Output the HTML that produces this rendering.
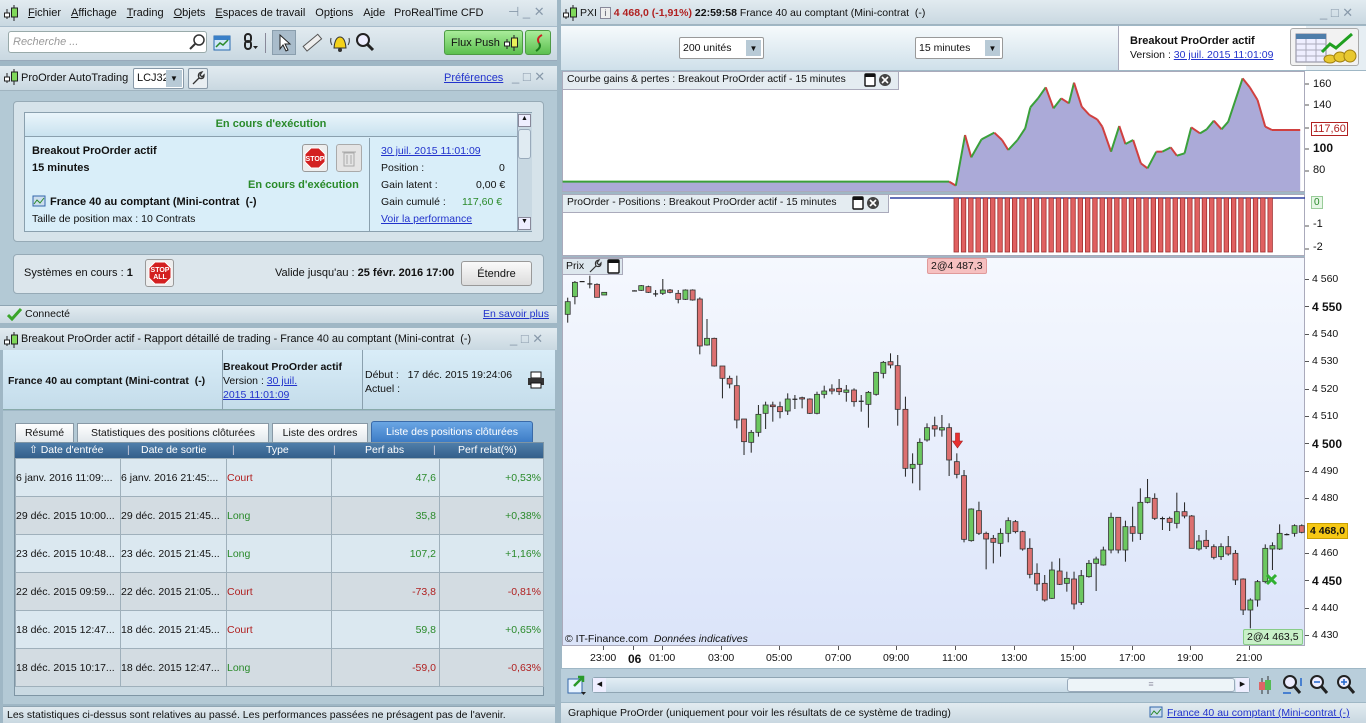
<!DOCTYPE html>
<html><head><meta charset="utf-8">
<style>
*{box-sizing:border-box;margin:0;padding:0}
body{width:1366px;height:723px;overflow:hidden;background:#9fb7c5;font-family:"Liberation Sans",Arial,sans-serif;font-size:11px;color:#111;position:relative}
.a{position:absolute;white-space:nowrap}
a,.lnk{color:#2233cc;text-decoration:underline}
.bar{background:linear-gradient(#e2ebf0,#c9d8e1)}
.b{font-weight:bold}
.g{color:#2a8a2a}.r{color:#b02020}
td{padding:0;white-space:nowrap;overflow:hidden}
.ctl{color:#8899aa;font-size:13px}
.m span{margin-right:10px}
</style></head><body>

<!-- LEFT PANE -->
<div class="a bar" style="left:0;top:0;width:557px;height:27px;border-bottom:1px solid #a8bccb"></div>
<svg class="a" style="left:4px;top:5px" width="14" height="16"><line x1="3" y1="4" x2="3" y2="14" stroke="#222"/><rect x="0.5" y="8" width="5" height="4" fill="#fff" stroke="#222"/><line x1="10" y1="0" x2="10" y2="16" stroke="#222"/><rect x="7.5" y="3" width="6" height="9" fill="#7fd85a" stroke="#222"/></svg>
<div class="a m" style="left:28px;top:7px;font-size:11px">
<span><u>F</u>ichier</span><span><u>A</u>ffichage</span><span><u>T</u>rading</span><span><u>O</u>bjets</span><span><u>E</u>spaces de travail</span><span>Op<u>t</u>ions</span><span>A<u>i</u>de</span></div>
<div class="a" style="left:394px;top:7px">ProRealTime CFD</div>
<div class="a ctl" style="left:508px;top:4px">⊣ _ ✕</div>

<div class="a bar" style="left:0;top:27px;width:557px;height:34px;border-bottom:1px solid #9ab"></div>
<div class="a" style="left:8px;top:31px;width:199px;height:22px;background:#fff;border:1px solid #9aa;border-radius:3px;color:#999;font-style:italic;padding:4px 4px;font-size:11px">Recherche ...</div>
<svg class="a" style="left:188px;top:33px" width="18" height="18"><circle cx="11" cy="7" r="5" fill="none" stroke="#333" stroke-width="1.5"/><line x1="7" y1="11" x2="2" y2="16" stroke="#333" stroke-width="2"/></svg>
<svg class="a" style="left:211px;top:31px" width="22" height="22"><rect x="3" y="5" width="16" height="14" fill="#cfe6f8" stroke="#2a6bb0"/><rect x="3" y="5" width="16" height="4" fill="#3a80c8"/><polyline points="5,16 9,12 12,14 17,9" fill="none" stroke="#2a8a2a" stroke-width="1.5"/></svg>
<svg class="a" style="left:238px;top:31px" width="22" height="22"><rect x="7" y="3" width="6" height="8" rx="3" fill="none" stroke="#222" stroke-width="2"/><rect x="7" y="10" width="6" height="8" rx="3" fill="none" stroke="#222" stroke-width="2"/><path d="M15 15l5 0-2.5 3z" fill="#222"/></svg>
<div class="a" style="left:265px;top:33px;width:1px;height:20px;background:#889"></div>
<div class="a" style="left:272px;top:30px;width:24px;height:25px;background:#a9bccb;border:1px solid #8a9ead"></div>
<svg class="a" style="left:276px;top:33px" width="18" height="20"><path d="M4 2 L4 16 L7 12 L10 18 L12 17 L9 11 L14 11 Z" fill="#fff" stroke="#222"/></svg>
<svg class="a" style="left:300px;top:31px" width="24" height="24"><rect x="3" y="9" width="19" height="6" transform="rotate(-40 12 12)" fill="#eee" stroke="#555"/></svg>
<svg class="a" style="left:328px;top:31px" width="24" height="24"><path d="M6 17 Q7 6 12 6 Q17 6 18 17 Z" fill="#f4d21a" stroke="#333"/><circle cx="12" cy="19" r="2" fill="#333"/><path d="M3 7 Q2 11 4 14 M21 7 Q22 11 20 14" fill="none" stroke="#333"/></svg>
<svg class="a" style="left:354px;top:31px" width="22" height="22"><circle cx="9" cy="9" r="6" fill="#eef" stroke="#222" stroke-width="2"/><line x1="13" y1="13" x2="19" y2="19" stroke="#222" stroke-width="3"/></svg>
<div class="a" style="left:444px;top:30px;width:79px;height:25px;background:linear-gradient(#a9ec9a,#5cc04f);border:1px solid #4d9a44;border-radius:3px;padding:6px 0 0 6px">Flux Push</div>
<svg class="a" style="left:503px;top:33px" width="16" height="20"><line x1="4" y1="6" x2="4" y2="16" stroke="#222"/><rect x="1.5" y="9" width="5" height="4" fill="#fff" stroke="#222"/><line x1="11" y1="2" x2="11" y2="18" stroke="#222"/><rect x="8.5" y="5" width="6" height="9" fill="#e8f25a" stroke="#222"/></svg>
<div class="a" style="left:525px;top:30px;width:26px;height:25px;background:linear-gradient(#a9ec9a,#5cc04f);border:1px solid #4d9a44;border-radius:3px"></div>
<svg class="a" style="left:530px;top:32px" width="18" height="22"><path d="M12 3 Q6 6 9 11" fill="none" stroke="#c22" stroke-width="2"/><path d="M9 11 Q12 15 6 19" fill="none" stroke="#1a7a1a" stroke-width="2"/></svg>

<div class="a bar" style="left:0;top:66px;width:557px;height:25px;border-bottom:1px solid #a0b4c0"></div>
<svg class="a" style="left:4px;top:69px" width="14" height="16"><line x1="3" y1="4" x2="3" y2="14" stroke="#222"/><rect x="0.5" y="8" width="5" height="4" fill="#fff" stroke="#222"/><line x1="10" y1="0" x2="10" y2="16" stroke="#222"/><rect x="7.5" y="3" width="6" height="9" fill="#7fd85a" stroke="#222"/></svg>
<div class="a" style="left:21px;top:72px">ProOrder AutoTrading</div>
<div class="a" style="left:133px;top:68px;width:51px;height:21px;background:#fff;border:1px solid #8899a8;border-radius:2px;padding:3px 3px">LCJ32</div>
<div class="a" style="left:166px;top:70px;width:16px;height:17px;background:#b8cad6;font-size:8px;text-align:center;padding-top:4px">▼</div>
<div class="a" style="left:188px;top:68px;width:20px;height:21px;background:#e8eef2;border:1px solid #8899a8;border-radius:2px"></div>
<svg class="a" style="left:190px;top:70px" width="16" height="16"><path d="M3 14 L9 8 M9 8 Q7 3 12 2 L10 5 L12 7 L14 5 Q14 10 9 8" fill="none" stroke="#333" stroke-width="1.3"/></svg>
<div class="a lnk" style="left:444px;top:72px">Préférences</div>
<div class="a ctl" style="left:512px;top:69px">_ □ ✕</div>

<div class="a" style="left:0;top:91px;width:557px;height:214px;background:#b3c9d5"></div>
<div class="a" style="left:13px;top:101px;width:531px;height:141px;background:#d6e3ea;border:1px solid #96aab6;border-radius:4px"></div>
<div class="a" style="left:24px;top:112px;width:508px;height:120px;background:#d9eef9;border:1px solid #8aa0ae"></div>
<div class="a" style="left:25px;top:113px;width:492px;height:24px;background:linear-gradient(#eaf5fb,#c9e2ef);border-bottom:1px solid #8aa0ae;text-align:center;padding-top:5px;color:#2a8a2a;font-weight:bold">En cours d'exécution</div>
<div class="a" style="left:369px;top:138px;width:1px;height:93px;background:#8aa0ae"></div>
<div class="a" style="left:517px;top:113px;width:15px;height:118px;background:#c8d8e2;border-left:1px solid #9ab"></div>
<div class="a" style="left:518px;top:114px;width:13px;height:13px;background:#eef;border:1px solid #889;font-size:7px;text-align:center">▲</div>
<div class="a" style="left:518px;top:129px;width:13px;height:30px;background:#e0ebf2;border:1px solid #9ab;border-radius:3px"></div>
<div class="a" style="left:518px;top:217px;width:13px;height:13px;background:#eef;border:1px solid #889;font-size:7px;text-align:center">▼</div>
<div class="a b" style="left:32px;top:145px">Breakout ProOrder actif</div>
<div class="a b" style="left:32px;top:162px">15 minutes</div>
<div class="a b g" style="left:248px;top:179px">En cours d'exécution</div>
<svg class="a" style="left:32px;top:195px" width="14" height="12"><rect x="1" y="1" width="12" height="10" fill="#cde" stroke="#36a"/><polyline points="2,9 5,5 8,8 12,3" fill="none" stroke="#2a8a2a"/></svg>
<div class="a b" style="left:50px;top:196px">France 40 au comptant (Mini-contrat&nbsp; (-)</div>
<div class="a" style="left:32px;top:213px;font-size:10.5px">Taille de position max : 10 Contrats</div>
<div class="a" style="left:302px;top:144px;width:26px;height:28px;background:#eee;border:1px solid #999;border-radius:3px"></div>
<svg class="a" style="left:304px;top:147px" width="22" height="22"><polygon points="7,1 15,1 21,7 21,15 15,21 7,21 1,15 1,7" fill="#d32020" stroke="#fff"/><text x="11" y="14" font-size="7" fill="#fff" font-weight="bold" text-anchor="middle" font-family="Liberation Sans">STOP</text></svg>
<div class="a" style="left:336px;top:144px;width:26px;height:28px;background:#e4e4e4;border:1px solid #aaa;border-radius:3px"></div>
<svg class="a" style="left:341px;top:148px" width="16" height="20"><rect x="3" y="5" width="10" height="13" fill="none" stroke="#aaa"/><line x1="1" y1="4" x2="15" y2="4" stroke="#aaa"/><line x1="6" y1="7" x2="6" y2="16" stroke="#aaa"/><line x1="10" y1="7" x2="10" y2="16" stroke="#aaa"/></svg>
<div class="a lnk" style="left:381px;top:145px;font-size:10.5px">30 juil. 2015 11:01:09</div>
<div class="a" style="left:381px;top:162px;font-size:10.5px">Position :</div><div class="a" style="left:499px;top:162px;font-size:10.5px">0</div>
<div class="a" style="left:381px;top:179px;font-size:10.5px">Gain latent :</div><div class="a" style="left:476px;top:179px;font-size:10.5px">0,00 €</div>
<div class="a" style="left:381px;top:196px;font-size:10.5px">Gain cumulé :</div><div class="a g" style="left:462px;top:196px;font-size:10.5px">117,60 €</div>
<div class="a lnk" style="left:381px;top:213px;font-size:10.5px">Voir la performance</div>

<div class="a" style="left:13px;top:254px;width:531px;height:40px;background:#dce6ec;border:1px solid #96aab6;border-radius:4px"></div>
<div class="a" style="left:24px;top:267px">Systèmes en cours : <b>1</b></div>
<div class="a" style="left:145px;top:259px;width:29px;height:28px;background:#eee;border:1px solid #999;border-radius:3px"></div>
<svg class="a" style="left:148px;top:261px" width="24" height="24"><polygon points="7,1 17,1 23,7 23,17 17,23 7,23 1,17 1,7" fill="#d32020" stroke="#fff"/><text x="12" y="11" font-size="7" fill="#fff" font-weight="bold" text-anchor="middle" font-family="Liberation Sans">STOP</text><text x="12" y="18" font-size="7" fill="#fff" font-weight="bold" text-anchor="middle" font-family="Liberation Sans">ALL</text></svg>
<div class="a" style="left:275px;top:267px">Valide jusqu'au : <b>25 févr. 2016 17:00</b></div>
<div class="a" style="left:461px;top:261px;width:71px;height:25px;background:linear-gradient(#fafafa,#dcdcdc);border:1px solid #999;border-radius:3px;text-align:center;padding-top:6px">Étendre</div>

<div class="a bar" style="left:0;top:305px;width:557px;height:18px;border-top:1px solid #8fa5b3"></div>
<svg class="a" style="left:7px;top:308px" width="15" height="13"><path d="M1 7 L5 11 L14 1" fill="none" stroke="#3aa52a" stroke-width="3"/></svg>
<div class="a" style="left:25px;top:308px;font-size:10.5px">Connecté</div>
<div class="a lnk" style="left:483px;top:308px;font-size:10.5px">En savoir plus</div>

<div class="a bar" style="left:0;top:328px;width:557px;height:22px"></div>
<svg class="a" style="left:4px;top:332px" width="14" height="16"><line x1="3" y1="4" x2="3" y2="14" stroke="#222"/><rect x="0.5" y="8" width="5" height="4" fill="#fff" stroke="#222"/><line x1="10" y1="0" x2="10" y2="16" stroke="#222"/><rect x="7.5" y="3" width="6" height="9" fill="#7fd85a" stroke="#222"/></svg>
<div class="a" style="left:21px;top:333px;font-size:10.8px">Breakout ProOrder actif - Rapport détaillé de trading - France 40 au comptant (Mini-contrat&nbsp; (-)</div>
<div class="a ctl" style="left:510px;top:331px">_ □ ✕</div>
<div class="a" style="left:3px;top:350px;width:552px;height:60px;background:linear-gradient(#d9edf8,#c4dcea);border-bottom:1px solid #8aa"></div>
<div class="a" style="left:222px;top:350px;width:1px;height:60px;background:#8aa0ae"></div>
<div class="a" style="left:362px;top:350px;width:1px;height:60px;background:#8aa0ae"></div>
<div class="a b" style="left:8px;top:375px;font-size:10.5px">France 40 au comptant (Mini-contrat&nbsp; (-)</div>
<div class="a" style="left:223px;top:360px;font-size:10.5px;line-height:14px"><b>Breakout ProOrder actif</b><br>Version : <span class="lnk">30 juil.</span><br><span class="lnk">2015 11:01:09</span></div>
<div class="a" style="left:365px;top:368px;font-size:10.5px;line-height:14px">Début :&nbsp;&nbsp; 17 déc. 2015 19:24:06<br>Actuel :</div>
<svg class="a" style="left:527px;top:371px" width="18" height="18"><rect x="4" y="1" width="10" height="6" fill="#fff" stroke="#111"/><rect x="1" y="7" width="16" height="7" fill="#333"/><rect x="4" y="12" width="10" height="5" fill="#fff" stroke="#111"/></svg>
<div class="a" style="left:3px;top:411px;width:552px;height:293px;background:#b3c9d5"></div>
<div class="a" style="left:15px;top:423px;width:59px;height:20px;background:linear-gradient(#fff,#e2e8ec);border:1px solid #8899a6;text-align:center;padding-top:3px;font-size:10.5px">Résumé</div>
<div class="a" style="left:77px;top:423px;width:192px;height:20px;background:linear-gradient(#fff,#e2e8ec);border:1px solid #8899a6;text-align:center;padding-top:3px;font-size:10.5px">Statistiques des positions clôturées</div>
<div class="a" style="left:272px;top:423px;width:96px;height:20px;background:linear-gradient(#fff,#e2e8ec);border:1px solid #8899a6;text-align:center;padding-top:3px;font-size:10.5px">Liste des ordres</div>
<div class="a" style="left:371px;top:421px;width:162px;height:22px;background:linear-gradient(#6aa6e4,#3d7cc6);border:1px solid #3a6aa8;border-radius:3px 3px 0 0;color:#fff;text-align:center;padding-top:4px;font-size:10.5px">Liste des positions clôturées</div>
<div class="a" style="left:14px;top:442px;width:530px;height:254px;background:#c9d9e2;border:1px solid #7e95a4"></div>
<div class="a" style="left:15px;top:443px;width:528px;height:15px;background:linear-gradient(#4f7eaa,#335f8a);color:#fff;font-size:10.5px">
<span class="a" style="left:14px;top:1px">⇧ Date d'entrée</span><span class="a" style="left:112px;top:1px;color:#ccd">|</span>
<span class="a" style="left:126px;top:1px">Date de sortie</span><span class="a" style="left:217px;top:1px;color:#ccd">|</span>
<span class="a" style="left:251px;top:1px">Type</span><span class="a" style="left:318px;top:1px;color:#ccd">|</span>
<span class="a" style="left:350px;top:1px">Perf abs</span><span class="a" style="left:418px;top:1px;color:#ccd">|</span>
<span class="a" style="left:443px;top:1px">Perf relat(%)</span></div>
<table class="a" style="left:15px;top:458px;width:528px;border-collapse:collapse;font-size:10.5px;table-layout:fixed">
<colgroup><col style="width:105px"><col style="width:106px"><col style="width:105px"><col style="width:108px"><col style="width:104px"></colgroup>
<tr style="height:38px;background:#dbe8f0"><td style="border:1px solid #9fb0bb">6 janv. 2016 11:09:...</td><td style="border:1px solid #9fb0bb">6 janv. 2016 21:45:...</td><td style="border:1px solid #9fb0bb" class="r">Court</td><td style="border:1px solid #9fb0bb;text-align:right;padding-right:3px" class="g">47,6</td><td style="border:1px solid #9fb0bb;text-align:right;padding-right:2px" class="g">+0,53%</td></tr>
<tr style="height:38px;background:#d3dce2"><td style="border:1px solid #9fb0bb">29 déc. 2015 10:00...</td><td style="border:1px solid #9fb0bb">29 déc. 2015 21:45...</td><td style="border:1px solid #9fb0bb" class="g">Long</td><td style="border:1px solid #9fb0bb;text-align:right;padding-right:3px" class="g">35,8</td><td style="border:1px solid #9fb0bb;text-align:right;padding-right:2px" class="g">+0,38%</td></tr>
<tr style="height:38px;background:#dbe8f0"><td style="border:1px solid #9fb0bb">23 déc. 2015 10:48...</td><td style="border:1px solid #9fb0bb">23 déc. 2015 21:45...</td><td style="border:1px solid #9fb0bb" class="g">Long</td><td style="border:1px solid #9fb0bb;text-align:right;padding-right:3px" class="g">107,2</td><td style="border:1px solid #9fb0bb;text-align:right;padding-right:2px" class="g">+1,16%</td></tr>
<tr style="height:38px;background:#d3dce2"><td style="border:1px solid #9fb0bb">22 déc. 2015 09:59...</td><td style="border:1px solid #9fb0bb">22 déc. 2015 21:05...</td><td style="border:1px solid #9fb0bb" class="r">Court</td><td style="border:1px solid #9fb0bb;text-align:right;padding-right:3px" class="r">-73,8</td><td style="border:1px solid #9fb0bb;text-align:right;padding-right:2px" class="r">-0,81%</td></tr>
<tr style="height:38px;background:#dbe8f0"><td style="border:1px solid #9fb0bb">18 déc. 2015 12:47...</td><td style="border:1px solid #9fb0bb">18 déc. 2015 21:45...</td><td style="border:1px solid #9fb0bb" class="r">Court</td><td style="border:1px solid #9fb0bb;text-align:right;padding-right:3px" class="g">59,8</td><td style="border:1px solid #9fb0bb;text-align:right;padding-right:2px" class="g">+0,65%</td></tr>
<tr style="height:38px;background:#d3dce2"><td style="border:1px solid #9fb0bb">18 déc. 2015 10:17...</td><td style="border:1px solid #9fb0bb">18 déc. 2015 12:47...</td><td style="border:1px solid #9fb0bb" class="g">Long</td><td style="border:1px solid #9fb0bb;text-align:right;padding-right:3px" class="r">-59,0</td><td style="border:1px solid #9fb0bb;text-align:right;padding-right:2px" class="r">-0,63%</td></tr>
</table>
<div class="a bar" style="left:3px;top:706px;width:552px;height:17px;border-top:1px solid #8fa5b3"></div>
<div class="a" style="left:7px;top:709px;font-size:10.5px">Les statistiques ci-dessus sont relatives au passé. Les performances passées ne présagent pas de l'avenir.</div>

<!-- RIGHT PANE -->
<div class="a bar" style="left:561px;top:0;width:805px;height:25px;border-bottom:1px solid #a0b4c0"></div>
<svg class="a" style="left:563px;top:5px" width="14" height="16"><line x1="3" y1="4" x2="3" y2="14" stroke="#222"/><rect x="0.5" y="8" width="5" height="4" fill="#fff" stroke="#222"/><line x1="10" y1="0" x2="10" y2="16" stroke="#222"/><rect x="7.5" y="3" width="6" height="9" fill="#7fd85a" stroke="#222"/></svg>
<div class="a" style="left:580px;top:7px;font-size:10.5px">PXI <span style="display:inline-block;width:11px;height:12px;border:1px solid #889;background:#eee;font-size:9px;text-align:center;line-height:11px;color:#556">i</span> <b class="r">4 468,0 (-1,91%)</b> <b>22:59:58</b> France 40 au comptant (Mini-contrat&nbsp; (-)</div>
<div class="a ctl" style="left:1320px;top:5px">_ □ ✕</div>
<div class="a" style="left:561px;top:26px;width:557px;height:44px;background:linear-gradient(#f6fafc,#cfe0ea)"></div>
<div class="a" style="left:1118px;top:26px;width:188px;height:44px;background:#fff;border-left:1px solid #aab"></div>
<div class="a" style="left:1306px;top:26px;width:60px;height:44px;background:#e6eef3"></div>
<div class="a" style="left:679px;top:37px;width:85px;height:22px;background:#fff;border:1px solid #999;border-radius:2px;padding:4px 3px;font-size:10.5px">200 unités</div>
<div class="a" style="left:746px;top:40px;width:15px;height:16px;background:#b8cad6;font-size:8px;text-align:center;padding-top:4px">▼</div>
<div class="a" style="left:915px;top:37px;width:88px;height:22px;background:#fff;border:1px solid #999;border-radius:2px;padding:4px 3px;font-size:10.5px">15 minutes</div>
<div class="a" style="left:985px;top:40px;width:15px;height:16px;background:#b8cad6;font-size:8px;text-align:center;padding-top:4px">▼</div>
<div class="a b" style="left:1130px;top:35px;font-size:11px">Breakout ProOrder actif</div>
<div class="a" style="left:1130px;top:49px;font-size:10.5px">Version : <span class="lnk">30 juil. 2015 11:01:09</span></div>
<div class="a" style="left:1290px;top:28px;width:69px;height:38px;background:#f2f2f2;border:1px solid #aaa;border-radius:3px"></div>
<svg class="a" style="left:1292px;top:30px" width="66" height="36"><rect x="4" y="4" width="30" height="28" fill="#eef" stroke="#889"/><rect x="4" y="4" width="30" height="5" fill="#4f7eaa"/><g stroke="#aab"><line x1="4" y1="14" x2="34" y2="14"/><line x1="4" y1="20" x2="34" y2="20"/><line x1="4" y1="26" x2="34" y2="26"/><line x1="14" y1="9" x2="14" y2="32"/><line x1="24" y1="9" x2="24" y2="32"/></g><ellipse cx="38" cy="29" rx="6" ry="4" fill="#e8c830" stroke="#a08010"/><ellipse cx="48" cy="27" rx="6" ry="5" fill="#e8c830" stroke="#a08010"/><ellipse cx="58" cy="26" rx="6" ry="6" fill="#e8c830" stroke="#a08010"/><polyline points="30,22 38,14 44,18 60,4" fill="none" stroke="#20a020" stroke-width="3"/></svg>

<!-- equity panel -->
<div class="a" style="left:562px;top:71px;width:743px;height:121px;background:#fff;border:1px solid #aab"></div>
<div class="a" style="left:1305px;top:71px;width:61px;height:597px;background:#fff"></div>
<svg class="a" id="eq" style="left:560px;top:0" width="806" height="200"></svg>
<div class="a" style="left:562px;top:71px;width:337px;height:19px;background:#e4ecf1;border:1px solid #aab;padding:2px 4px;font-size:10.3px">Courbe gains &amp; pertes : Breakout ProOrder actif - 15 minutes</div>
<svg class="a" style="left:864px;top:73px" width="32" height="15"><rect x="1" y="1" width="10" height="12" rx="1" fill="#fff" stroke="#111" stroke-width="1.4"/><rect x="1" y="1" width="10" height="3" fill="#111"/><circle cx="21" cy="7" r="6" fill="#444"/><path d="M18 4l6 6M24 4l-6 6" stroke="#fff" stroke-width="1.6"/></svg>
<div class="a" style="left:1313px;top:78px;font-size:11px">160</div>
<div class="a" style="left:1313px;top:99px;font-size:11px">140</div>
<div class="a" style="left:1311px;top:122px;font-size:11px;color:#b02020;border:1px solid #b02020;background:#fff;padding:0 1px">117,60</div>
<div class="a b" style="left:1313px;top:141px;font-size:12px">100</div>
<div class="a" style="left:1313px;top:164px;font-size:11px">80</div>

<!-- positions panel -->
<div class="a" style="left:562px;top:194px;width:743px;height:62px;background:#fff;border:1px solid #aab"></div>
<svg class="a" id="pos" style="left:560px;top:190px" width="806" height="66"></svg>
<div class="a" style="left:562px;top:194px;width:327px;height:19px;background:#e4ecf1;border:1px solid #aab;padding:2px 4px;font-size:10.3px">ProOrder - Positions : Breakout ProOrder actif - 15 minutes</div>
<svg class="a" style="left:852px;top:196px" width="32" height="15"><rect x="1" y="1" width="10" height="12" rx="1" fill="#fff" stroke="#111" stroke-width="1.4"/><rect x="1" y="1" width="10" height="3" fill="#111"/><circle cx="21" cy="7" r="6" fill="#444"/><path d="M18 4l6 6M24 4l-6 6" stroke="#fff" stroke-width="1.6"/></svg>
<div class="a" style="left:1311px;top:196px;font-size:10px;color:#2a8a2a;border:1px solid #9c9;background:#e6f6e6;padding:0 2px">0</div>
<div class="a" style="left:1313px;top:218px;font-size:11px">-1</div>
<div class="a" style="left:1313px;top:241px;font-size:11px">-2</div>

<!-- price panel -->
<div class="a" style="left:562px;top:257px;width:743px;height:389px;background:linear-gradient(#f5f8fe,#dbe4f9);border:1px solid #aab"></div>
<svg class="a" id="px" style="left:560px;top:255px" width="806" height="400"></svg>
<div class="a" style="left:562px;top:258px;width:61px;height:17px;background:#dde7ee;border:1px solid #aab;padding:1px 3px;font-size:10.5px">Prix</div>
<svg class="a" style="left:588px;top:259px" width="34" height="15"><path d="M2 13 L8 7 M8 7 Q6 2 11 1 L9 4 L11 6 L13 4 Q13 9 8 7" fill="none" stroke="#333" stroke-width="1.2"/><rect x="20" y="1" width="11" height="13" rx="1" fill="#fff" stroke="#111" stroke-width="1.4"/><rect x="20" y="1" width="11" height="3" fill="#111"/></svg>
<div class="a" style="left:927px;top:258px;padding:1px 3px;font-size:10.5px;background:#f6c0c0;border:1px solid #e09a9a;border-radius:2px">2@4 487,3</div>
<div class="a" style="left:1243px;top:629px;padding:1px 3px;font-size:10.5px;background:#c8f0c8;border:1px solid #8c8;border-radius:2px">2@4 463,5</div>
<div class="a" style="left:565px;top:633px;font-size:10.5px">© IT-Finance.com&nbsp; <i>Données indicatives</i></div>
<div class="a" id="pax" style="left:1305px;top:0;font-size:10.5px"></div>
<div class="a b" style="left:1307px;top:523px;font-size:10.5px;background:#f6c814;border:1px solid #c9a000;padding:1px 2px">4 468,0</div>

<!-- time axis -->
<div class="a" style="left:562px;top:646px;width:743px;height:22px;background:#fff"></div>
<div class="a" id="tax" style="left:0;top:652px;font-size:10.5px"></div>

<div class="a" style="left:561px;top:669px;width:805px;height:33px;background:#b9cedb"></div>
<svg class="a" style="left:566px;top:674px" width="22" height="22"><rect x="2" y="5" width="14" height="14" fill="#e8f4ff" stroke="#36a"/><path d="M8 12 L16 4 M12 3 L17 3 L17 8" stroke="#2a9a2a" stroke-width="2.5" fill="none"/><path d="M15 18l5 0-2.5 3z" fill="#222"/></svg>
<div class="a" style="left:592px;top:677px;width:658px;height:16px;background:linear-gradient(#e3eef5,#c7dae6);border:1px solid #8fa5b3;border-radius:3px"></div>
<div class="a" style="left:593px;top:678px;width:13px;height:14px;background:#eef;font-size:7px;text-align:center;padding-top:2px">◀</div>
<div class="a" style="left:1067px;top:678px;width:168px;height:14px;background:#edf4f8;border:1px solid #9ab;border-radius:3px;color:#99a;font-size:9px;text-align:center">≡</div>
<div class="a" style="left:1236px;top:678px;width:13px;height:14px;background:#eef;font-size:7px;text-align:center;padding-top:2px">▶</div>
<svg class="a" style="left:1256px;top:674px" width="110" height="24"><line x1="6" y1="4" x2="6" y2="20" stroke="#333"/><rect x="3" y="8" width="6" height="8" fill="#d66"/><line x1="12" y1="2" x2="12" y2="20" stroke="#333"/><rect x="9" y="6" width="6" height="10" fill="#5b5"/>
<circle cx="34" cy="8" r="6" fill="#eef" stroke="#222" stroke-width="2"/><line x1="38" y1="12" x2="44" y2="19" stroke="#222" stroke-width="3"/><path d="M27 19h8M45 4v8" stroke="#26c" stroke-width="1.5"/>
<circle cx="61" cy="8" r="6" fill="#eef" stroke="#222" stroke-width="2"/><line x1="65" y1="12" x2="71" y2="19" stroke="#222" stroke-width="3"/><path d="M58 8h6" stroke="#26c" stroke-width="1.5"/>
<circle cx="88" cy="8" r="6" fill="#eef" stroke="#222" stroke-width="2"/><line x1="92" y1="12" x2="98" y2="19" stroke="#222" stroke-width="3"/><path d="M85 8h6M88 5v6" stroke="#26c" stroke-width="1.5"/></svg>
<div class="a bar" style="left:561px;top:703px;width:805px;height:20px"></div>
<div class="a" style="left:568px;top:707px;font-size:10.5px">Graphique ProOrder (uniquement pour voir les résultats de ce système de trading)</div>
<svg class="a" style="left:1149px;top:706px" width="14" height="12"><rect x="1" y="1" width="12" height="10" fill="#cde" stroke="#36a"/><polyline points="2,9 5,5 8,8 12,3" fill="none" stroke="#2a8a2a"/></svg>
<div class="a lnk" style="left:1167px;top:707px;font-size:10.5px">France 40 au comptant (Mini-contrat (-)</div>
<div class="a" style="left:557px;top:0;width:4px;height:723px;background:#9fb7c5"></div>

<script>
var NS="http://www.w3.org/2000/svg",sx=806/1568;
function el(p,t,a){var e=document.createElementNS(NS,t);for(var k in a)e.setAttribute(k,a[k]);p.appendChild(e);return e;}
var eq=document.getElementById('eq');
var pts=[[5,545],[757,545],[770,557],[788,405],[800,472],[820,418],[845,398],[860,420],[872,450],[890,420],[905,385],[915,322],[930,295],[945,262],[960,325],[975,295],[990,310],[1000,248],[1015,320],[1030,345],[1045,358],[1055,380],[1072,455],[1088,378],[1100,432],[1115,420],[1130,490],[1143,505],[1160,455],[1172,455],[1188,442],[1200,467],[1215,460],[1228,382],[1245,400],[1258,388],[1272,362],[1287,388],[1300,365],[1328,235],[1342,262],[1357,300],[1372,380],[1385,390],[1440,390]];
var P=pts.map(function(p){return [p[0]*sx,p[1]/3]});
var d="M"+P[0][0]+",191 "+P.map(function(p){return "L"+p[0]+","+p[1]}).join(" ")+" L"+P[P.length-1][0]+",191Z";
el(eq,'path',{d:d,fill:'#abaad8'});
for(var i=1;i<P.length;i++){var c=P[i][1]<P[i-1][1]?'#3aa03a':'#d04040';if(i==1)c='#3aa03a';el(eq,'line',{x1:P[i-1][0],y1:P[i-1][1],x2:P[i][0],y2:P[i][1],stroke:c,'stroke-width':2});}
[[80,160],[101,140],[124,117.6],[145,100],[167,80]].forEach(function(t){el(eq,'line',{x1:745,y1:t[0]+4,x2:749,y2:t[0]+4,stroke:'#555'})});
var pos=document.getElementById('pos');
el(pos,'line',{x1:330,y1:8,x2:745,y2:8,stroke:'#3040a0','stroke-width':1.5});
for(var x=394;x<708;x+=7.3){el(pos,'rect',{x:x,y:8,width:4.5,height:54,fill:'#e06060',stroke:'#a03030','stroke-width':0.8});}
[[28,-1],[51,-2]].forEach(function(t){el(pos,'line',{x1:745,y1:t[0]+8,x2:749,y2:t[0]+8,stroke:'#555'})});
var C=[[15,140,178,128,203,'g'],[29,82,125,78,148,'g'],[43,78,79,78,79,'k'],[58,85,86,62,100,'k'],[72,88,127,85,127,'r'],[86,112,120,112,120,'g'],[145,106,107,106,107,'k'],[158,92,106,90,108,'g'],[172,95,112,92,114,'r'],[186,115,116,105,125,'k'],[200,105,115,72,120,'g'],[214,105,112,102,115,'r'],[230,115,133,105,145,'r'],[244,105,133,103,135,'g'],[258,105,135,103,137,'r'],[272,132,273,127,298,'r'],[286,250,270,192,272,'g'],[300,250,333,248,335,'r'],[316,333,370,333,430,'r'],[330,370,387,362,400,'r'],[344,392,495,362,520,'r'],[358,492,560,492,600,'r'],[372,532,562,525,593,'g'],[386,478,532,450,545,'g'],[400,450,475,440,522,'g'],[414,450,455,440,500,'r'],[428,455,470,440,490,'r'],[443,432,468,415,480,'g'],[457,431,433,420,462,'k'],[471,428,432,425,460,'r'],[486,432,475,430,477,'r'],[500,418,475,410,478,'g'],[514,408,418,392,430,'g'],[529,402,408,388,418,'r'],[543,400,410,372,420,'r'],[557,405,412,390,440,'g'],[572,405,440,400,455,'r'],[586,437,439,420,470,'k'],[600,412,448,408,518,'g'],[615,352,418,350,422,'g'],[629,322,355,318,370,'g'],[643,320,330,295,340,'r'],[657,332,463,300,512,'r'],[672,463,640,425,665,'r'],[686,628,640,595,685,'g'],[700,562,628,550,706,'g'],[714,518,555,505,560,'g'],[729,512,522,485,545,'r'],[743,518,525,480,545,'g'],[757,518,615,505,663,'r'],[772,620,658,595,670,'r'],[786,662,853,645,862,'r'],[800,762,857,760,860,'g'],[815,767,835,740,840,'r'],[829,835,852,830,943,'r'],[843,850,862,840,925,'r'],[857,835,865,820,905,'g'],[872,797,835,787,862,'g'],[886,800,830,795,835,'r'],[900,830,882,827,887,'r'],[914,880,958,850,970,'r'],[928,955,987,925,1008,'r'],[943,985,1035,960,1040,'r'],[957,945,1030,920,1032,'g'],[972,948,988,910,990,'r'],[986,970,985,950,1010,'g'],[1000,972,1047,950,1063,'r'],[1014,962,1042,945,1050,'g'],[1029,925,965,915,968,'g'],[1043,912,925,905,1008,'g'],[1057,885,930,875,932,'g'],[1072,787,885,773,895,'g'],[1086,787,885,787,895,'r'],[1100,815,885,797,920,'g'],[1114,815,835,755,860,'r'],[1129,742,835,700,855,'g'],[1143,728,742,672,745,'g'],[1157,730,790,715,795,'r'],[1172,789,791,785,825,'k'],[1186,790,802,785,828,'r'],[1200,770,805,713,820,'g'],[1215,770,783,742,790,'r'],[1229,783,880,780,880,'r'],[1243,858,882,840,887,'g'],[1257,856,875,825,882,'r'],[1272,875,907,868,913,'r'],[1286,875,905,865,915,'g'],[1300,875,897,843,902,'r'],[1314,895,975,885,990,'r'],[1329,972,1065,970,1080,'r'],[1343,1035,1065,1030,1120,'g'],[1357,980,1035,975,1055,'g'],[1372,880,980,868,985,'g'],[1386,872,882,862,945,'g'],[1400,835,882,808,885,'g'],[1414,837,839,835,841,'k'],[1429,812,835,808,845,'g'],[1443,812,832,808,835,'r']];
var px=document.getElementById('px');
C.forEach(function(c){var x=c[0]*sx;el(px,'line',{x1:x,y1:c[3]/3,x2:x,y2:c[4]/3,stroke:'#222'});var h=Math.max((c[2]-c[1])/3,1);
if(c[5]=='k')el(px,'rect',{x:x-2.5,y:c[1]/3,width:5,height:1.2,fill:'#222'});else el(px,'rect',{x:x-2.5,y:c[1]/3,width:5,height:h,fill:c[5]=='g'?'#6cc860':'#dc7070',stroke:'#333','stroke-width':0.8});});
el(px,'path',{d:'M395.5,178 L399.5,178 L399.5,186 L402.5,186 L397.5,193 L392.5,186 L395.5,186Z',fill:'#e83030',stroke:'#a02020','stroke-width':0.6});
el(px,'path',{d:'M707,320 L716,329 M716,320 L707,329',stroke:'#30b030','stroke-width':3});
var pax=document.getElementById('pax'),h='';
[[4560,0],[4550,1],[4540,0],[4530,0],[4520,0],[4510,0],[4500,1],[4490,0],[4480,0],[4470,0],[4460,0],[4450,1],[4440,0],[4430,0]].forEach(function(p){var y=280+(4560-p[0])*2.738;if(p[0]==4470)return;h+='<div style="position:absolute;left:0;top:'+(y-1)+'px;width:4px;height:1px;background:#555"></div><div style="position:absolute;left:7px;top:'+(y-7)+'px;white-space:nowrap;'+(p[1]?'font-weight:bold;font-size:12px':'')+'">'+String(p[0]).replace(/^(\d)/,'$1 ')+'</div>';});
pax.innerHTML=h;
var tax=document.getElementById('tax'),t='';
[['23:00',604],['06',634,1],['01:00',663],['03:00',722],['05:00',780],['07:00',839],['09:00',897],['11:00',956],['13:00',1015],['15:00',1074],['17:00',1133],['19:00',1191],['21:00',1250]].forEach(function(a){t+='<div style="position:absolute;left:'+(a[1]-1)+'px;top:-6px;width:1px;height:4px;background:#555"></div><div style="position:absolute;left:'+(a[1]-(a[2]?6:14))+'px;top:0;white-space:nowrap;'+(a[2]?'font-weight:bold;font-size:12px':'')+'">'+a[0]+'</div>';});
tax.innerHTML=t;
</script>
</body></html>
